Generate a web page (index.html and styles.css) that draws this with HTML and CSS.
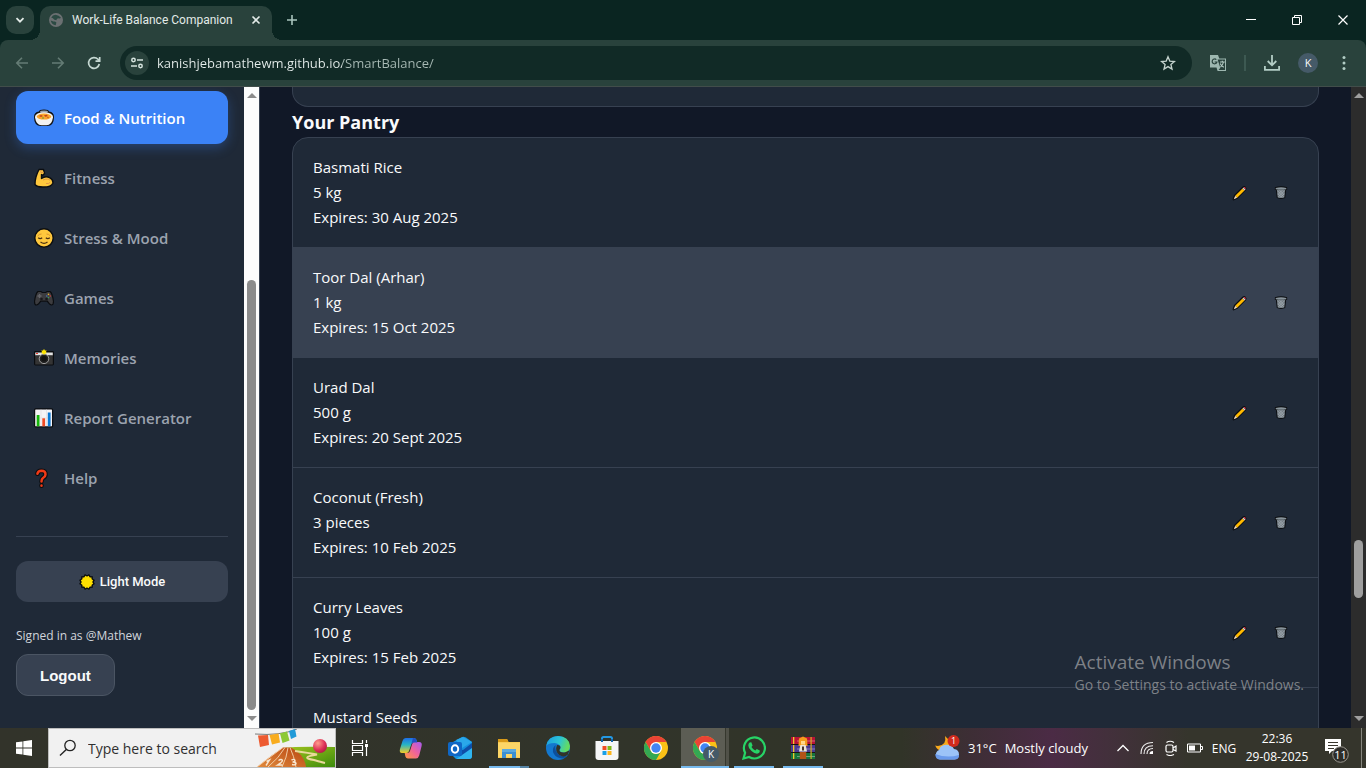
FILE: index.html
```html
<!DOCTYPE html>
<html lang="en">
<head>
<meta charset="utf-8">
<title>Work-Life Balance Companion</title>
<link rel="stylesheet" href="styles.css">
</head>
<body>
<svg class="sprite" aria-hidden="true">
  <symbol id="pencil" viewBox="0 0 16 16">
    <path d="M1.600 14.400l1.200-3.600 8.300-8.300q1.100-.8 2 .1t.1 2l-8.200 8.200z" fill="#0b0d10" stroke="#0b0d10" stroke-width="2" stroke-linejoin="round"/>
    <path d="M3.200 10.800l7.300-7.300 2 2-7.300 7.300z" fill="#ffb900"/>
    <path d="M10.500 3.500l1-1 2 2-1 1z" fill="#cfd6dc"/>
    <path d="M11.500 2.500q1-.9 1.700-.2t.3 2.200z" fill="#e8374a"/>
    <path d="M3.200 10.800l2 2-3.400 1.400z" fill="#f5dcc0"/>
  </symbol>
  <symbol id="trash" viewBox="0 0 16 16">
    <path d="M1 2Q8-.3 15 2v3.200h-1.200L12.800 14.400Q8 16.300 3.200 14.400L2.200 5.200H1z" fill="#0b0d10"/>
    <path d="M3.300 5h9.400l-.9 8.600q-3.800 1.300-7.600 0z" fill="#747d84"/>
    <path d="M2 2.800q6-1.800 12 0v1.500q-6 1.200-12 0z" fill="#87939a"/>
    <path d="M4 6l7 7M6.500 5.600l5.300 5.300M4.500 9.300l4 4M12 6l-7 7M9.300 5.600L4.400 10.500M11.700 9.300l-4 4" stroke="#a9b4ba" stroke-width=".7"/>
  </symbol>
  <symbol id="chrome" viewBox="0 0 24 24">
    <circle cx="12" cy="12" r="12" fill="#fbc116"/>
    <path d="M12 6h10.400a12 12 0 0 0-20.800 0l5.200 9z" fill="#ea4335"/>
    <path d="M1.600 6A12 12 0 0 0 12 24l5.200-9a6 6 0 0 1-10.400 0z" fill="#34a853"/>
    <circle cx="12" cy="12" r="6" fill="#fff"/><circle cx="12" cy="12" r="4.700" fill="#4285f4"/>
  </symbol>
</svg>

<header class="tabs">
  <button class="tab-search" aria-label="Search tabs"><svg width="10" height="10" viewBox="0 0 10 10"><path d="M1.500 3.200L5 6.700l3.500-3.500" fill="none" stroke="#e3ebe8" stroke-width="1.800"/></svg></button>
  <div class="tab">
    <svg width="14" height="14" viewBox="0 0 14 14"><circle cx="7" cy="7" r="7" fill="#6b7072"/><path d="M6.500 1.800q3.500.5 5.500 2.900-1 1.200-2.500.6L8 5.800l-.6 1.400-2-.5L3.600 5 2.200 4.800Q3.500 2 6.500 1.800zM1.700 7.600l2.700 1 1.600-.2 1.400 1.200-.7 2.600Q2.500 11.800 1.700 7.600z" fill="#2b4a43"/></svg>
    <span class="tab-title">Work-Life Balance Companion</span>
    <button class="icon-btn" aria-label="Close tab"><svg width="10" height="10" viewBox="0 0 10 10"><path d="M1.500 1.500l7 7m0-7l-7 7" stroke="#e3ebe8" stroke-width="1.600"/></svg></button>
  </div>
  <button class="icon-btn new-tab" aria-label="New tab"><svg width="12" height="12" viewBox="0 0 12 12"><path d="M6 1v10M1 6h10" stroke="#a9c5bd" stroke-width="1.600"/></svg></button>
  <div class="window-controls">
    <button class="icon-btn" aria-label="Minimize"><svg width="12" height="12" viewBox="0 0 12 12"><path d="M1 5.500h10" stroke="#fff"/></svg></button>
    <button class="icon-btn" aria-label="Restore"><svg width="12" height="12" viewBox="0 0 12 12"><path d="M1.500 3.500h7v7h-7zM3.500 3.500v-2h7v7h-2" fill="none" stroke="#fff"/></svg></button>
    <button class="icon-btn" aria-label="Close"><svg width="12" height="12" viewBox="0 0 12 12"><path d="M1.500 1.500l9 9m0-9l-9 9" stroke="#fff" stroke-width="1.200"/></svg></button>
  </div>
</header>

<div class="toolbar-back">
<div class="toolbar">
  <button class="icon-btn nav-btn" aria-label="Back"><svg width="14" height="14" viewBox="0 0 14 14"><path d="M13 7H2m5-5.200L1.800 7 7 12.200" fill="none" stroke="#647c75" stroke-width="1.600"/></svg></button>
  <button class="icon-btn nav-btn" aria-label="Forward"><svg width="14" height="14" viewBox="0 0 14 14"><path d="M1 7h11M7 1.800L12.200 7 7 12.200" fill="none" stroke="#647c75" stroke-width="1.600"/></svg></button>
  <button class="icon-btn nav-btn" aria-label="Reload"><svg width="14" height="14" viewBox="0 0 14 14"><path d="M12.300 8A5.400 5.400 0 1 1 11 3.300l1.300 1.400M12.700 1v4.200H8.500" fill="none" stroke="#c5d8d2" stroke-width="1.700"/></svg></button>
  <div class="address">
    <button class="site-info" aria-label="Site information"><svg width="14" height="14" viewBox="0 0 14 14"><g fill="none" stroke="#d5e3de" stroke-width="1.500"><circle cx="3.500" cy="4" r="1.700"/><path d="M7 4h6M1 10h6"/><circle cx="10.500" cy="10" r="1.700"/></g></svg></button>
    <input class="url" type="text" aria-label="Address" value="kanishjebamathewm.github.io/SmartBalance/">
    <button class="icon-btn" aria-label="Bookmark"><svg width="16" height="16" viewBox="0 0 16 16"><path d="M8 1.800l1.800 4.300 4.600.4-3.500 3 1.100 4.600L8 11.600l-4 2.500 1.100-4.600-3.500-3 4.600-.4z" fill="none" stroke="#c5d3ce" stroke-width="1.300"/></svg></button>
  </div>
  <div class="tools">
    <button class="icon-btn" aria-label="Translate"><svg width="18" height="18" viewBox="0 0 18 18"><path d="M1 1h8l1.300 3.500H17V17H8.600L7.500 13.500H1z" fill="#9db7b0"/><path d="M10 5.500h6v10.500H9.600l1.700-2.300L8.600 5.500z" fill="#29423c"/><path d="M11 8h4.800M13.300 6.800V8m1.200 0q-.6 3-3 5m-.3-3.500q1 2.500 3.600 3.800" fill="none" stroke="#b4cbc4" stroke-width="1.100"/><path d="M7.300 5.700A2.400 2.400 0 1 0 7.900 8H5.600" fill="none" stroke="#29423c" stroke-width="1.200"/></svg></button>
    <span class="divider"></span>
    <button class="icon-btn" aria-label="Downloads"><svg width="18" height="18" viewBox="0 0 18 18"><path d="M9 1v10M4.700 7L9 11.300 13.300 7M1.900 12v3.900h14.200V12" fill="none" stroke="#b2cdc5" stroke-width="1.800"/></svg></button>
    <button class="icon-btn" aria-label="Profile"><span class="profile">K</span></button>
    <button class="icon-btn" aria-label="Menu"><svg width="4" height="16" viewBox="0 0 4 16"><g fill="#b2cdc5"><circle cx="2" cy="2.500" r="1.500"/><circle cx="2" cy="8" r="1.500"/><circle cx="2" cy="13.500" r="1.500"/></g></svg></button>
  </div>
</div>
</div>

<div class="page">
  <aside class="sidebar">
    <nav class="nav">
      <a class="nav-item active" href="#food"><svg width="20" height="20" viewBox="0 0 20 20"><path d="M0 9Q0 4 5 3.500q0-2 5-2t5 2q5 .5 5 5.500 0 9-7 9H7Q0 18 0 9z" fill="#111"/><path d="M6 3.800q0-1.300 4-1.300t4 1.300l-1 1H7z" fill="#9da5ad"/><path d="M1 9q1 8.300 6.500 8.300h5Q18 17.300 19 9z" fill="#f2f2f2"/><ellipse cx="10" cy="8.500" rx="9" ry="4.300" fill="#f6f3ee"/><ellipse cx="10" cy="8.600" rx="7.200" ry="3" fill="#fba62c"/><path d="M5 8l2-1 2 1-2 1zM10 7.300l3-.6.8 1.600-2.700.5z" fill="#c44216"/><circle cx="9" cy="10" r=".8" fill="#5a963c"/><circle cx="14" cy="9.500" r=".8" fill="#cf5a1c"/></svg>Food &amp; Nutrition</a>
      <a class="nav-item" href="#fitness"><svg width="20" height="20" viewBox="0 0 20 20"><path d="M5 1.500h4.500l1 4-2 2-1-1v4q4-3 8-.8 4 2 3.300 5.500-1.500 3.800-9 3.800-7 .2-8.800-2.500Q1 9 5 1.500z" fill="#ffc83d" stroke="#0b0d10" stroke-width="1.400" stroke-linejoin="round"/><path d="M6.800 2v2.500l3-.2M9 12q5-2 7 .3M12 15.500q3 .6 4.300-1.300" fill="none" stroke="#e19747" stroke-width="1"/></svg>Fitness</a>
      <a class="nav-item" href="#stress"><svg width="20" height="20" viewBox="0 0 20 20"><circle cx="10" cy="10" r="9.200" fill="#ffc83d" stroke="#0b0d10" stroke-width="1.400"/><path d="M3.500 8q2-2.200 4-2M16.500 8q-2-2.200-4-2" fill="none" stroke="#d9942d" stroke-width="1"/><path d="M4.200 9.800q2 1.800 4 0m3.600 0q2 1.800 4 0M6.500 14q3.500 2.700 7 0" fill="none" stroke="#4a3012" stroke-width="1.200"/></svg>Stress &amp; Mood</a>
      <a class="nav-item" href="#games"><svg width="20" height="20" viewBox="0 0 20 20"><path d="M4 3.500h3l1.300 1h3.400l1.300-1h3q2.500 2 3.500 10 0 3.500-2 3.500-1.700 0-4.200-3.800H6.700Q4.200 17 2.500 17q-2 0-2-3.500Q1.500 5.500 4 3.500z" fill="#3c3c3f" stroke="#0b0d10" stroke-width="1.200"/><path d="M5.500 6v4m-2-2h4" stroke="#65656a" stroke-width="1.400"/><circle cx="7.500" cy="11" r="1.300" fill="#18181a"/><circle cx="12.500" cy="11" r="1.300" fill="#18181a"/><circle cx="14.500" cy="6.400" r=".8" fill="#e5b02a"/><circle cx="16.200" cy="8" r=".8" fill="#d43f3f"/><circle cx="12.800" cy="8" r=".8" fill="#4178c5"/><circle cx="14.500" cy="9.600" r=".8" fill="#3b9b58"/></svg>Games</a>
      <a class="nav-item" href="#memories"><svg width="20" height="20" viewBox="0 0 20 20"><rect x="0" y="3" width="20" height="14.500" rx="1.400" fill="#0b0d10"/><path d="M1.200 4.500h17.600v3H1.200z" fill="#e3e3e3"/><path d="M1.200 7.500h17.600v9H1.200z" fill="#343434"/><path d="M2 5h2v1H2z" fill="#e8372b"/><circle cx="10" cy="10.800" r="4.800" fill="#222" stroke="#aaa" stroke-width=".9"/><circle cx="10" cy="10.800" r="2.700" fill="#121212"/><path d="M10 1l1 1.400 1.700.1-.7 1.500.7 1.500-1.700.1L10 7 9 5.600l-1.700-.1L8 4l-.7-1.500L9 2.400z" fill="#ffe600"/></svg>Memories</a>
      <a class="nav-item" href="#report"><svg width="20" height="20" viewBox="0 0 20 20"><rect x=".600" y=".900" width="18" height="18" rx="1" fill="#f5f3f6" stroke="#0b0d10" stroke-width="1.200"/><path d="M7 1.500V18M12.500 1.500V18M1.200 10h17" stroke="#dcdadf" stroke-width=".6"/><path d="M2.700 7h2.800v11.300H2.700z" fill="#16b60b"/><path d="M8.300 10.300h2.800v8H8.300z" fill="#f04a24"/><path d="M13.800 4.500h2.800v13.800h-2.800z" fill="#0a78d4"/></svg>Report Generator</a>
      <a class="nav-item" href="#help"><svg width="20" height="20" viewBox="0 0 20 20"><g fill="none" stroke-linecap="round"><path d="M3.400 5.700Q4 2.800 7.500 2.800q4 .1 4 3.600 0 2.200-2.500 3.600-1.500 1-1.500 3.500M7.500 17.600v.1" stroke="#0b0d10" stroke-width="4.600"/><path d="M3.400 5.700Q4 2.800 7.500 2.800q4 .1 4 3.600 0 2.200-2.500 3.600-1.500 1-1.500 3.500M7.500 17.600v.1" stroke="#f03a17" stroke-width="2.500"/></g></svg>Help</a>
    </nav>
    <div class="side-foot">
      <button class="mode"><svg width="16" height="16" viewBox="0 0 16 16"><g stroke="#0b0d10" stroke-width="2.600"><rect x="3.500" y="3.500" width="9" height="9"/><rect x="3.500" y="3.500" width="9" height="9" transform="rotate(30 8 8)"/><rect x="3.500" y="3.500" width="9" height="9" transform="rotate(60 8 8)"/></g><g fill="#ffe000"><rect x="3.500" y="3.500" width="9" height="9"/><rect x="3.500" y="3.500" width="9" height="9" transform="rotate(30 8 8)"/><rect x="3.500" y="3.500" width="9" height="9" transform="rotate(60 8 8)"/></g></svg>Light Mode</button>
      <p class="signed">Signed in as @Mathew</p>
      <button class="logout">Logout</button>
    </div>
  </aside>
  <div class="scroll scroll-light"><i class="arrow up"></i><div class="track"><div class="before-light"></div><div class="thumb"></div></div><i class="arrow down"></i></div>

  <main class="content">
    <div class="card-end"></div>
    <h3 class="heading">Your Pantry</h3>
    <ul class="pantry">
      <li class="row"><div>Basmati Rice<br>5 kg<br>Expires: 30 Aug 2025</div><div class="actions"><button class="icon-btn" aria-label="Edit"><svg width="16" height="16"><use href="#pencil"/></svg></button><button class="icon-btn" aria-label="Delete"><svg width="14" height="15"><use href="#trash"/></svg></button></div></li>
      <li class="row hovered"><div>Toor Dal (Arhar)<br>1 kg<br>Expires: 15 Oct 2025</div><div class="actions"><button class="icon-btn" aria-label="Edit"><svg width="16" height="16"><use href="#pencil"/></svg></button><button class="icon-btn" aria-label="Delete"><svg width="14" height="15"><use href="#trash"/></svg></button></div></li>
      <li class="row"><div>Urad Dal<br>500 g<br>Expires: 20 Sept 2025</div><div class="actions"><button class="icon-btn" aria-label="Edit"><svg width="16" height="16"><use href="#pencil"/></svg></button><button class="icon-btn" aria-label="Delete"><svg width="14" height="15"><use href="#trash"/></svg></button></div></li>
      <li class="row"><div>Coconut (Fresh)<br>3 pieces<br>Expires: 10 Feb 2025</div><div class="actions"><button class="icon-btn" aria-label="Edit"><svg width="16" height="16"><use href="#pencil"/></svg></button><button class="icon-btn" aria-label="Delete"><svg width="14" height="15"><use href="#trash"/></svg></button></div></li>
      <li class="row"><div>Curry Leaves<br>100 g<br>Expires: 15 Feb 2025</div><div class="actions"><button class="icon-btn" aria-label="Edit"><svg width="16" height="16"><use href="#pencil"/></svg></button><button class="icon-btn" aria-label="Delete"><svg width="14" height="15"><use href="#trash"/></svg></button></div></li>
      <li class="row"><div>Mustard Seeds</div></li>
    </ul>
  </main>
  <div class="scroll scroll-dark"><i class="arrow up"></i><div class="track"><div class="before-dark"></div><div class="thumb"></div></div><i class="arrow down"></i></div>
  <div class="watermark"><div class="wm-title">Activate Windows</div><div class="wm-text">Go to Settings to activate Windows.</div></div>
</div>

<footer class="taskbar">
  <button class="task" aria-label="Start"><svg width="16" height="16" viewBox="0 0 16 16"><path d="M0 2.300l6.500-.9v6.100H0zM7.300 1.300L16 0v7.500H7.300zM0 8.400h6.500v6.200L0 13.700zM7.300 8.400H16V16l-8.700-1.200z" fill="#fff"/></svg></button>
  <div class="search">
    <svg width="18" height="18" viewBox="0 0 18 18"><circle cx="11" cy="6.500" r="5.200" fill="none" stroke="#222" stroke-width="1.300"/><path d="M7.300 10.500L1 16.600" stroke="#222" stroke-width="1.400"/></svg>
    <input type="text" aria-label="Search" placeholder="Type here to search">
    <svg width="80" height="38" viewBox="0 0 80 38">
      <defs><linearGradient id="trk" x1="0" y1="1" x2="1" y2="0"><stop offset="0" stop-color="#e08a3c"/><stop offset="1" stop-color="#b94712"/></linearGradient><linearGradient id="fld" x1="0" x2="1" y1="0" y2="1"><stop offset="0" stop-color="#a3c51e"/><stop offset="1" stop-color="#3d8b0c"/></linearGradient><radialGradient id="ball" cx=".35" cy=".3" r=".8"><stop offset="0" stop-color="#ff9d8c"/><stop offset=".6" stop-color="#dd3159"/><stop offset="1" stop-color="#a81742"/></radialGradient></defs>
      <path d="M28 19q14-2 52-1v20H38z" fill="url(#fld)"/>
      <path d="M2 38Q14 28 28 18.500h8Q50 26 51 38z" fill="url(#trk)"/>
      <path d="M13 38Q24 29 30 18.500M27 38Q32 28 33 18.500M41 38Q39 27 35 18.500M2 38Q15 28 28 18.500" fill="none" stroke="#f5d5b0" stroke-width=".9"/>
      <g fill="none" stroke="#f8e6d0" stroke-width="1.400"><path d="M11.500 32.500l3-1.500-3.500 5.500M23.500 31.500q3-2 4 0 0 1.500-5 4.500h5M36.500 31q3-1.500 3.500.500 0 1.500-2.500 1.500 3.500 0 3.500 1.500-.5 2-4 1"/></g>
      <path d="M40 22q14 2 22 3.500-18 3-3 5.500 3 1 11 3" fill="none" stroke="#ead99c" stroke-width="2"/>
      <circle cx="65" cy="17" r="7" fill="url(#ball)"/>
      <path d="M0 5q25 2 42-5" fill="none" stroke="#7b7b7b" stroke-width="1"/>
      <path d="M3 6.500l10-.5 1 10-9 2z" fill="#ed5a30"/><path d="M14.500 6l9-1.500 1.500 9-8 2z" fill="#f8ac1e"/><path d="M25 4.500l7-2 2.500 9-7 2.500z" fill="#8cc936"/><path d="M34 2l6-2 1.500 7.500-5.500 2.500z" fill="#229bd8"/>
    </svg>
  </div>
  <button class="task" aria-label="Task view"><svg width="18" height="16" viewBox="0 0 18 16"><path d="M1.500 0v3.500h10V0M1.500 16v-3.500h10V16M1.500 5.500h10v5h-10zM15.500 0v3M15.500 7v9" fill="none" stroke="#fff" stroke-width="1.200"/><path d="M14 4h3v3h-3z" fill="#fff"/></svg></button>
  <div class="apps">
    <button class="task" aria-label="Copilot"><svg width="24" height="24" viewBox="0 0 24 24"><defs><linearGradient id="cp1" x1="0" y1="0" x2="0" y2="1"><stop offset="0" stop-color="#1e6ee8"/><stop offset=".45" stop-color="#27b5c4"/><stop offset="1" stop-color="#f4cb26"/></linearGradient><linearGradient id="cp2" x1="1" y1="0" x2="0" y2="1"><stop offset="0" stop-color="#a55af4"/><stop offset=".5" stop-color="#f1639a"/><stop offset="1" stop-color="#ff9b3d"/></linearGradient></defs><path d="M7 2h8q2 0 2.600 2l.7 2.500h-3.500q-2 0-2.600 2L10 15q-.6 2-2.600 2H3q-3 0-2-4l2.500-8Q4.500 2 7 2z" fill="url(#cp1)"/><path d="M17 22.500H9q-2 0-2.600-2L5.700 17h2.700q2 0 2.600-2l2.200-7q.6-2 2.600-2H20q3.500 0 2.600 4l-2.400 9.500q-.9 3-3.200 3z" fill="url(#cp2)"/><path d="M14 2q2.500 0 3.500 2l.8 2.500h-3.500q-2 0-2.600 2z" fill="#224fc2"/></svg></button>
    <button class="task" aria-label="Outlook"><svg width="24" height="24" viewBox="0 0 24 24"><path d="M5 6l9-5q2-.6 4 .6l6 4.400v14q0 3-3 3H8l-3-3z" fill="#1490df"/><path d="M8 4l7-3 9 5-10 6z" fill="#2aa8ea"/><path d="M10 13l5 1 9-7v6l-12 9z" fill="#0f4fa8"/><path d="M9 22.500L24 12v8q0 3-3 3H9z" fill="#2fb5ef"/><rect x="0" y="6" width="14" height="14" rx="2" fill="#0f67c5"/><ellipse cx="7" cy="13" rx="3.200" ry="3.700" fill="none" stroke="#fff" stroke-width="2"/></svg></button>
    <button class="task running grouped" aria-label="File Explorer"><svg width="24" height="24" viewBox="0 0 24 24"><path d="M1 3h9l1.500 3H23v16H1z" fill="#f5c242"/><path d="M1 3h9l1.500 3H1z" fill="#d99a18"/><path d="M1 6.500h22V21.500H1z" fill="#fcd667"/><path d="M5 13h14v9h-4v-4H9v4H5z" fill="#3b8fd2"/><path d="M5 13h14v3H5z" fill="#5aa9df"/></svg></button>
    <button class="task" aria-label="Edge"><svg width="24" height="24" viewBox="0 0 24 24"><defs><linearGradient id="eg1" x1="0" y1="0" x2="1" y2=".3"><stop offset="0" stop-color="#1a9be4"/><stop offset=".6" stop-color="#2cc5d3"/><stop offset="1" stop-color="#63db62"/></linearGradient></defs><circle cx="12" cy="12" r="12" fill="#1378cf"/><path d="M.200 10Q2 0 12 0q11 .5 12 10 0 6-6 6.500-5-.2-4.500-2.500 1-1.300 1-2.500Q14 7.500 8.500 7 2 7 .2 10z" fill="url(#eg1)"/><path d="M9.500 9Q5 13 8 18t10 4.300l4-3.600q-3 2.300-7.500.8Q8 16 9.500 9z" fill="#0c4f9b"/><path d="M11 9q4 0 3.400 3-1.800 2-.5 3.500 2 1.500 5.500.8l4.200-2-1.800 4.500q-4 3-8.500.3Q8.500 15 11 9z" fill="#313428"/></svg></button>
    <button class="task" aria-label="Microsoft Store"><svg width="24" height="24" viewBox="0 0 24 24"><path d="M7 7V2.500Q7 1 8.500 1h7Q17 1 17 2.500V7" fill="none" stroke="#2498e2" stroke-width="2"/><path d="M.500 5h23v16q0 3-3 3h-17q-3 0-3-3z" fill="#f5f6f7"/><path d="M7 6V3M17 6V3" stroke="#1267af" stroke-width="2"/><path d="M7.500 10h4v4h-4z" fill="#f04d23"/><path d="M12.500 10h4v4h-4z" fill="#7fb91a"/><path d="M7.500 15h4v4h-4z" fill="#18a0e8"/><path d="M12.500 15h4v4h-4z" fill="#fcb51c"/></svg></button>
    <button class="task" aria-label="Chrome"><svg width="24" height="24"><use href="#chrome"/></svg></button>
    <button class="task running current" aria-label="Chrome, profile K"><svg width="24" height="24"><use href="#chrome"/></svg><span class="badge">K</span></button>
    <button class="task running" aria-label="WhatsApp"><svg width="24" height="24" viewBox="0 0 24 24"><path d="M1.500 22.500l1.600-5.700A10.500 10.500 0 1 1 7.100 21z" fill="none" stroke="#27d366" stroke-width="2.200"/><path d="M7.600 6.500l1.700-.2 1.300 3.200-1.100 1.500q1.300 2.400 3.800 3.600l1.500-1.500 3 1.500q.2 2.700-2.800 3.100-2.600 0-5.500-2.600-3.200-3-3.200-5.700 0-1.900 1.300-2.900z" fill="#27d366"/></svg></button>
    <button class="task running" aria-label="WinRAR"><svg width="24" height="24" viewBox="0 0 24 24"><path d="M0 1h24v7H0z" fill="#b81336"/><path d="M0 9h24v7H0z" fill="#4a3a91"/><path d="M0 17h24v6H0z" fill="#16753c"/><path d="M6 5h18M6 13h18M6 20.500h18" stroke="#fff" stroke-opacity=".35"/><path d="M0 8.500h24M0 16.500h24" stroke="#1a1410"/><path d="M2 1h1.300v7H2zM2 9h1.300v7H2zM2 17h1.300v6H2z" fill="#f0c828"/><path d="M19.500 1h1.200v22h-1.200z" fill="#d3ad24"/><path d="M8 2.500l4-2 4 2 .5 7.500h-9z" fill="#f39c1c"/><path d="M9.300 9h5.400l1.300 6.500H8z" fill="#ece6da"/><path d="M8.800 16h6.400v7H8.800z" fill="#b25317"/><path d="M11 10.500h2v4h-2z" fill="#48362b"/><path d="M10 5h4v3.500h-4z" fill="#ffd88a"/></svg></button>
  </div>
  <div class="tray">
    <button class="weather"><svg width="26" height="26" viewBox="0 0 26 26"><path d="M11 1Q13 10 4 11q-3 0-3-.8 3 7 10 5.300Q19 13 16 6z" fill="#f8a91b"/><path d="M6 24.500a5 5 0 0 1-.8-9.600Q6 10 12 9.700t8 4.400q5 .7 5 5.400t-4.500 5z" fill="#9cc3f8"/><path d="M1.200 19q0 5.500 5.300 5.500h14q4.500 0 4.500-4.500-12 3.500-23.800-1z" fill="#6a9aec"/><circle cx="19.500" cy="6" r="6" fill="#d12a1e"/><text x="19.500" y="9" class="weather-count">1</text></svg><span>31°C</span><span>Mostly cloudy</span></button>
    <button class="status" aria-label="Show hidden icons"><svg width="14" height="14" viewBox="0 0 14 14"><path d="M1.500 10L7 4.500l5.500 5.500" fill="none" stroke="#fff" stroke-width="1.300"/></svg></button>
    <button class="status" aria-label="Network"><svg width="14" height="14" viewBox="0 0 14 14"><g fill="none" stroke="#eee" stroke-width="1.100"><path d="M1 13Q1 1.500 13 1.500M4 13Q4 4.700 13 4.700M7 13q0-5.500 6-5.500"/></g><path d="M9.500 13q0-3 3.500-3v3z" fill="#fff"/></svg></button>
    <button class="status" aria-label="Meet now"><svg width="14" height="16" viewBox="0 0 14 16"><g fill="none" stroke="#fff" stroke-width="1.200"><rect x="2" y="5" width="7" height="7" rx="1.500"/><path d="M9 8l3-2v5L9 9.500M2.500 2.500q3.500-2.500 7.500 0M2.500 14.500q3.500 2 7.500 0"/></g></svg></button>
    <button class="status" aria-label="Battery"><svg width="16" height="12" viewBox="0 0 16 12"><path d="M.500 2h13v8H.500zM13.500 4.500h2v3h-2" fill="none" stroke="#fff"/><path d="M2 3.500h6v5H2z" fill="#fff"/></svg></button>
    <button class="lang">ENG</button>
    <button class="clock"><span>22:36</span><span>29-08-2025</span></button>
    <button class="notify" aria-label="Notifications"><svg width="24" height="24" viewBox="0 0 24 24"><path d="M0 0h16v12H7l-3 3v-3H0z" fill="#fff"/><path d="M3 3.500h10M3 6.500h10M3 9.500h6" stroke="#3b382f"/><circle cx="15.500" cy="15.500" r="7.800" fill="#2d2c28" stroke="#99968f"/><text x="15.500" y="20" class="notify-count">11</text></svg></button>
    <button class="desktop" aria-label="Show desktop"></button>
  </div>
</footer>
</body>
</html>
```
FILE: styles.css
```css
* { box-sizing: border-box; }

body {
  margin: 0;
  height: 100vh;
  display: flex;
  flex-direction: column;
  overflow: hidden;
  background: #111827;
  color: #f9fafb;
  font-family: "Open Sans", "Noto Sans", sans-serif;
  font-size: 15px;
}

button, input { font: inherit; color: inherit; }
button { border: 0; padding: 0; background: none; }
svg { display: block; flex: none; }
.sprite { position: absolute; width: 0; height: 0; }
.icon-btn { display: flex; align-items: center; justify-content: center; }

/* Browser tabs */
.tabs {
  flex: none;
  display: flex;
  align-items: center;
  height: 40px;
  padding-left: 6px;
  background: #0a2521;
}
.tab-search {
  width: 28px;
  height: 28px;
  display: grid;
  place-items: center;
  border-radius: 10px;
  background: #29423c;
}
.tab {
  position: relative;
  align-self: flex-end;
  display: flex;
  align-items: center;
  width: 232px;
  height: 34px;
  margin-left: 6px;
  padding: 0 11px 6px 9px;
  gap: 9px;
  border-radius: 10px 10px 0 0;
  background: #29423c;
  color: #e3ebe8;
  font-family: Roboto, sans-serif;
  font-size: 12px;
}
.tab::before, .tab::after {
  content: "";
  position: absolute;
  bottom: 0;
  width: 10px;
  height: 10px;
}
.tab::before { right: 100%; background: radial-gradient(circle at 0 0, transparent 10px, #29423c 10px); }
.tab::after { left: 100%; background: radial-gradient(circle at 100% 0, transparent 10px, #29423c 10px); }
.tab-title { flex: 1; white-space: nowrap; }
.new-tab { width: 40px; }
.window-controls { display: flex; margin-left: auto; }
.window-controls .icon-btn { width: 46px; }

/* Toolbar */
.toolbar-back { flex: none; background: #0a2521; }
.toolbar {
  display: flex;
  align-items: center;
  height: 47px;
  padding: 0 4px;
  border-bottom: 1px solid #414d4a;
  border-radius: 8px 8px 0 0;
  background: #29423c;
}
.nav-btn { width: 36px; }
.address {
  flex: 1;
  display: flex;
  align-items: center;
  height: 34px;
  margin-left: 8px;
  padding: 0 16px 0 5px;
  border-radius: 17px;
  background: #112a26;
}
.site-info {
  width: 24px;
  height: 24px;
  display: grid;
  place-items: center;
  border-radius: 50%;
  background: #29423c;
}
.url {
  flex: 1;
  min-width: 0;
  margin-left: 8px;
  padding: 0;
  border: 0;
  outline: 0;
  font-size: 13px;
  background: linear-gradient(90deg, #e8f0ee 185px, #a9bbb6 185px);
  background-clip: text;
  color: transparent;
}
.tools { display: flex; align-items: center; margin-left: 8px; }
.tools .icon-btn { width: 36px; }
.divider { width: 2px; height: 16px; margin: 0 8px; background: #3d5952; }
.profile {
  width: 20px;
  height: 20px;
  border-radius: 50%;
  background: #455a68;
  font-size: 11px;
  line-height: 20px;
}

/* Page */
.page { position: relative; flex: 1; min-height: 0; display: flex; overflow: hidden; }
.sidebar {
  flex: none;
  width: 244px;
  padding: 4px 16px;
  background: #1f2937;
}
.nav { display: flex; flex-direction: column; gap: 7px; }
.nav-item {
  display: flex;
  align-items: center;
  gap: 10px;
  height: 53px;
  padding-left: 18px;
  border-radius: 12px;
  color: #9ca3af;
  font-weight: 600;
  text-decoration: none;
}
.nav-item.active {
  background: #3b82f6;
  color: #fff;
  box-shadow: 0 4px 12px rgba(59, 130, 246, .3);
}
.side-foot {
  margin-top: 32px;
  padding-top: 24px;
  border-top: 1px solid #374151;
}
.mode {
  display: flex;
  align-items: center;
  justify-content: center;
  gap: 5px;
  width: 100%;
  height: 41px;
  border-radius: 12px;
  background: #374151;
  font-family: Roboto, sans-serif;
  font-size: 13px;
  font-weight: 500;
}
.signed { margin: 24px 0 8px; font-size: 12px; line-height: 20px; color: #d1d5db; }
.logout {
  height: 42px;
  padding: 0 23px;
  border: 1px solid #4b5563;
  border-radius: 12px;
  background: #374151;
  font-family: "Liberation Sans", sans-serif;
  font-size: 15px;
  font-weight: 700;
}

.scroll { flex: none; width: 15px; display: flex; flex-direction: column; align-items: center; padding: 6px 0 7px; }
.scroll-light { width: 16px; background: #fcfcfc; border-right: 1px solid #374151; color: #8b8b8b; }
.scroll-dark { background: #2c2c2c; color: #9f9f9f; }
.arrow { width: 0; height: 0; border: 5px solid transparent; }
.arrow.up { border-top: 0; border-bottom-color: currentColor; }
.arrow.down { border-bottom: 0; border-top-color: currentColor; }
.track { flex: 1; display: flex; flex-direction: column; width: 9px; margin: 5px 0 6px; }
.thumb { border-radius: 5px; background: currentColor; }
.before-light { flex: 178; }
.scroll-light .thumb { flex: 431; }
.before-dark { height: 72%; }
.scroll-dark .thumb { height: 58px; }

.content { flex: 1; min-width: 0; padding: 0 32px; overflow: hidden; }
.card-end {
  height: 20px;
  border: 1px solid #374151;
  border-top: 0;
  border-radius: 0 0 16px 16px;
  background: #1f2937;
}
.heading { margin: 2px 0; font-size: 18px; line-height: 26px; font-weight: 700; }
.pantry {
  list-style: none;
  margin: 0;
  padding: 0;
  border: 1px solid #374151;
  border-radius: 16px;
  background: #1f2937;
}
.row {
  display: flex;
  align-items: center;
  justify-content: space-between;
  padding: 17px 21px 17px 20px;
  border-bottom: 1px solid #374151;
  line-height: 25px;
}
.row.hovered { background: #374151; }
.actions { display: flex; gap: 9px; }
.actions .icon-btn { width: 32px; height: 32px; }

.watermark { position: absolute; right: 62px; bottom: 33px; color: rgba(190, 190, 190, .6); }
.wm-title { font-size: 19px; line-height: 26px; }
.wm-text { font-size: 14px; line-height: 20px; }

/* Taskbar */
.taskbar {
  flex: none;
  display: flex;
  height: 40px;
  background: linear-gradient(90deg, #32332a 0, #31342a 45%, #313428 66%, #3d2e35 71%, #4b2b45 77%, #43303c 81%, #35352c 87%, #35352c 100%);
  color: #fff;
}
.task { position: relative; width: 48px; display: grid; place-items: center; }
.search {
  flex: none;
  display: flex;
  align-items: center;
  width: 288px;
  padding-left: 10px;
  border: 1px solid #bdbdbd;
  background: #f1f1f1;
  font-size: 14px;
}
.search input { flex: 1; min-width: 0; margin-left: 11px; padding: 0; border: 0; outline: 0; background: none; }
.search input::placeholder { color: #303030; opacity: 1; }
.apps { display: flex; gap: 1px; margin-left: 3px; }
.running::after {
  content: "";
  position: absolute;
  left: 4px;
  right: 4px;
  bottom: 0;
  height: 2px;
  background: #76b9ed;
}
.grouped::after { background: linear-gradient(90deg, #76b9ed 31px, #5684a5 31px); }
.current { background: linear-gradient(90deg, #5c5d54 44px, #36382e 44px, #36382e 45px, #505148 45px); }
.current::after { left: 0; right: 0; }
.badge {
  position: absolute;
  left: 22px;
  top: 18px;
  width: 16px;
  height: 16px;
  border-radius: 50%;
  background: #455a68;
  font-size: 10px;
  line-height: 16px;
}
.tray { display: flex; margin-left: auto; font-size: 12px; }
.weather { display: flex; align-items: center; gap: 8px; width: 177px; font-size: 13px; white-space: nowrap; }
.weather-count { font-size: 9px; text-anchor: middle; fill: #fff; }
.status { width: 24px; display: grid; place-items: center; }
.lang { width: 34px; }
.clock { width: 72px; display: flex; flex-direction: column; justify-content: center; line-height: 18px; }
.clock span { text-align: center; }
.notify { width: 48px; padding-top: 6px; display: grid; place-items: center; }
.notify-count { font-size: 11px; text-anchor: middle; fill: #fff; }
.desktop { width: 5px; border-left: 1px solid #85857d; }
```
